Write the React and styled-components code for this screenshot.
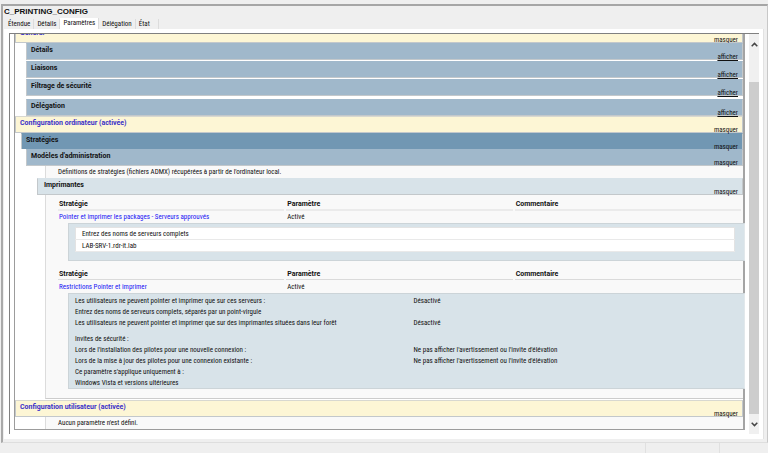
import React from 'react'
import styled, {createGlobalStyle} from "styled-components";

const sans = '"Roboto Condensed", "Liberation Sans", Arial, sans-serif';
const heading = 'Roboto, "Liberation Sans", Arial, sans-serif';

const tabs = ["Étendue", "Détails", "Paramètres", "Délégation", "État"];

const sections = ["Détails", "Liaisons", "Filtrage de sécurité", "Délégation"];

const servers = ["Entrez des noms de serveurs complets", "LAB-SRV-1.rdr-it.lab"];

const restrictions = [
  {
    name: "Les utilisateurs ne peuvent pointer et imprimer que sur ces serveurs :",
    value: "Désactivé",
  },
  {
    name: "Entrez des noms de serveurs complets, séparés par un point-virgule",
  },
  {
    name: "Les utilisateurs ne peuvent pointer et imprimer que sur des imprimantes situées dans leur forêt",
    value: "Désactivé",
  },
  {
    name: "Invites de sécurité :",
    first: true,
  },
  {
    name: "Lors de l'installation des pilotes pour une nouvelle connexion :",
    value: "Ne pas afficher l'avertissement ou l'invite d'élévation",
  },
  {
    name: "Lors de la mise à jour des pilotes pour une connexion existante :",
    value: "Ne pas afficher l'avertissement ou l'invite d'élévation",
  },
  {
    name: "Ce paramètre s'applique uniquement à :",
  },
  {
    name: "Windows Vista et versions ultérieures",
  },
];

function Section({title, kind, indent, open}) {
  return (
    <Bar $kind={kind} $indent={indent}>
      <h2>{title}</h2>
      <Toggle href="#" $open={open}>{open ? "masquer" : "afficher"}</Toggle>
    </Bar>
  );
}

function Policy({name, compact}) {
  return (
    <PolicyTable $compact={compact}>
      <thead>
        <tr>
          <th>Stratégie</th>
          <th>Paramètre</th>
          <th>Commentaire</th>
        </tr>
      </thead>
      <tbody>
        <tr>
          <td><a href="#">{name}</a></td>
          <td>Activé</td>
          <td></td>
        </tr>
      </tbody>
    </PolicyTable>
  );
}

export default function App() {
  return (
    <Window>
      <GlobalStyle />
      <Frame>
        <Title>C_PRINTING_CONFIG</Title>
        <Tabs>
          {tabs.map((tab) => (
            <Tab key={tab} $active={tab === "Paramètres"}>{tab}</Tab>
          ))}
        </Tabs>
        <Panel>
          <Viewport>
            <Report>
              <Section title="Général" kind="root" indent={0} open />
              <Closed>
                {sections.map((title) => (
                  <Section key={title} title={title} kind="sub" indent={11} />
                ))}
              </Closed>
              <Section title="Configuration ordinateur (activée)" kind="root" indent={0} open />
              <Section title="Stratégies" kind="dark" indent={6} open />
              <Section title="Modèles d'administration" kind="sub" indent={11} open />
              <Content>
                <Note>Définitions de stratégies (fichiers ADMX) récupérées à partir de l'ordinateur local.</Note>
              </Content>
              <Section title="Imprimantes" kind="light" indent={22} open />
              <Content $last>
                <Policy name="Pointer et imprimer les packages - Serveurs approuvés" compact />
                <Details>
                  <ServerTable>
                    <tbody>
                      {servers.map((server) => (
                        <tr key={server}><td>{server}</td></tr>
                      ))}
                    </tbody>
                  </ServerTable>
                </Details>
                <Policy name="Restrictions Pointer et imprimer" />
                <Details>
                  <OptionTable>
                    <tbody>
                      {restrictions.map((item) => (
                        <Option key={item.name} $first={item.first}>
                          <td>{item.name}</td>
                          <td>{item.value}</td>
                        </Option>
                      ))}
                    </tbody>
                  </OptionTable>
                </Details>
              </Content>
              <Section title="Configuration utilisateur (activée)" kind="root" indent={0} open />
              <Content>
                <Note>Aucun paramètre n'est défini.</Note>
              </Content>
            </Report>
            <ScrollBar>
              <Arrow aria-label="Haut">
                <svg width="7" height="5" viewBox="0 0 7 5"><path d="M0.7 4.2 3.5 1.4 6.3 4.2" /></svg>
              </Arrow>
              <Track><Thumb /></Track>
              <Arrow aria-label="Bas">
                <svg width="7" height="5" viewBox="0 0 7 5"><path d="M0.7 0.8 3.5 3.6 6.3 0.8" /></svg>
              </Arrow>
            </ScrollBar>
          </Viewport>
        </Panel>
      </Frame>
      <StatusBar>
        <span />
        <span />
        <span />
      </StatusBar>
    </Window>
  );
}

const GlobalStyle = createGlobalStyle`
  * {
    box-sizing: border-box;
  }
  body {
    margin: 0;
    background: #efefef;
    color: #111;
    font: 7px/10px ${sans};
  }
  h1, h2, p {
    margin: 0;
  }
  button {
    font: inherit;
    color: inherit;
    border: 0;
    padding: 0;
  }
  table {
    width: 100%;
    table-layout: fixed;
  }
  th, td {
    padding: 0;
    text-align: left;
  }
`;

const Window = styled.div`
  display: flex;
  flex-direction: column;
  min-height: 100vh;
  padding-top: 4px;
  overflow: hidden;
`;

const Frame = styled.main`
  margin-left: 1px;
  padding: 0 3px 3px 1px;
  border-top: 2px solid #a6a6a6;
  border-left: 2px solid #a9a9a9;
  border-right: 1px solid #c8c8c8;
  border-bottom: 1px solid #dedede;
`;

const Title = styled.h1`
  height: 13px;
  font: bold 8px/12px "Liberation Sans", Arial, sans-serif;
  color: #111;
`;

const Tabs = styled.nav`
  display: flex;
  align-items: flex-end;
  height: 10px;
  padding-left: 1px;
`;

const Tab = styled.button`
  height: ${(props) => (props.$active ? "11px" : "10px")};
  padding: 0 3px;
  padding-bottom: ${(props) => (props.$active ? "2px" : "0")};
  background: ${(props) => (props.$active ? "#fff" : "#efefef")};
  border-right: 1px solid #dcdcdc;
  &:last-child {
    padding-right: 8px;
  }
`;

const Panel = styled.div`
  padding: 4px 4px 5px 5px;
  background: #fff;
  border-right: 1px solid #e2e2e2;
`;

const Viewport = styled.div`
  display: flex;
  border-top: 1px solid #808080;
  border-left: 1px solid #808080;
  overflow: hidden;
`;

/* scrolled down, the first bar is half hidden */
const Report = styled.div`
  flex: 1;
  margin: -9px 4px 4px 4px;
  border: 1px solid #9c9c9c;
  border-right: 2px solid #a4a4a4;
`;

const barColors = {
  root: "#fdf6d5",
  dark: "#7197b3",
  sub: "#a0b8cb",
  light: "#d8e3e9",
};

const Bar = styled.div`
  display: flex;
  justify-content: space-between;
  height: ${(props) => (props.$kind === "dark" ? "16px" : "17px")};
  margin-left: ${(props) => props.$indent}px;
  padding: 0 4px 0 ${(props) => (props.$kind === "light" ? "6px" : "4px")};
  background: ${(props) => barColors[props.$kind]};
  border: 1px solid #c3c8cb;
  border-top-color: ${(props) => (props.$kind === "root" ? "#d8d8d0" : barColors[props.$kind])};
  border-bottom-width: ${(props) => (props.$kind === "dark" ? "0" : "1px")};
  h2 {
    font: bold 7px/12px ${heading};
    color: ${(props) => (props.$kind === "root" ? "#3a30c8" : "#111")};
  }
`;

const Toggle = styled.a`
  align-self: flex-end;
  margin-bottom: -2px;
  line-height: 8px;
  color: #111;
  text-decoration: ${(props) => (props.$open ? "none" : "underline")};
`;

const Closed = styled.div`
  display: grid;
  gap: 1px;
  ${Bar}:last-child {
    margin-top: 2px;
  }
`;

const Content = styled.div`
  margin-left: 30px;
  padding-bottom: ${(props) => (props.$last ? "9px" : "0")};
  margin-bottom: ${(props) => (props.$last ? "1px" : "0")};
  background: #f9f9f9;
  border-left: 1px solid #dcdcdc;
  border-bottom: ${(props) => (props.$last ? "1px solid #ccc" : "0")};
`;

const Note = styled.p`
  padding: 1px 0 1px 12px;
`;

const PolicyTable = styled.table`
  padding-top: ${(props) => (props.$compact ? "3px" : "6px")};
  padding-left: 10px;
  border-spacing: 2px 0;
  th {
    height: 13px;
    padding-top: 1px;
    font: bold 7px/10px ${heading};
    color: #111;
    border-bottom: ${(props) => (props.$compact ? "2px solid #ebebeb" : "1px solid #dadada")};
  }
  th, td {
    padding-left: 1px;
  }
  td {
    height: ${(props) => (props.$compact ? "12px" : "13px")};
  }
  a {
    color: #1a14f4;
    text-decoration: none;
  }
`;

const Details = styled.div`
  margin: 0 -2px 0 22px;
  padding: 1px 0 0 6px;
  background: #d8e3e9;
  border: 1px solid #ccd4d8;
  border-right-color: #e2e8eb;
`;

const ServerTable = styled.table`
  width: calc(100% - 9px);
  margin: 2px 0 8px;
  background: #fff;
  border: 1px solid #e3e3e3;
  border-collapse: collapse;
  td {
    height: 12px;
    padding-left: 6px;
    border-bottom: 1px solid #e9e9e9;
  }
`;

const OptionTable = styled.table`
  border-spacing: 0;
  td:last-child {
    padding-left: 4px;
  }
`;

const Option = styled.tr`
  td {
    height: ${(props) => (props.$first ? "16px" : "11px")};
    padding-top: ${(props) => (props.$first ? "5px" : "0")};
  }
`;

const ScrollBar = styled.div`
  display: flex;
  flex-direction: column;
  width: 10px;
  background: #f0f0f0;
`;

const Arrow = styled.button`
  display: flex;
  align-items: center;
  justify-content: center;
  height: 20px;
  background: none;
  svg {
    fill: none;
    stroke: #444;
    stroke-width: 1.5;
  }
`;

const Track = styled.div`
  flex: 1;
  padding-top: 28px;
`;

const Thumb = styled.div`
  height: 100%;
  background: #cdcdcd;
`;

const StatusBar = styled.footer`
  display: flex;
  justify-content: flex-end;
  flex: 1;
  span {
    width: 74px;
    border-left: 1px solid #e0e0e0;
  }
  span:last-child {
    width: 49px;
  }
  span:first-child {
    flex: 1;
    border-left: 0;
  }
`;
